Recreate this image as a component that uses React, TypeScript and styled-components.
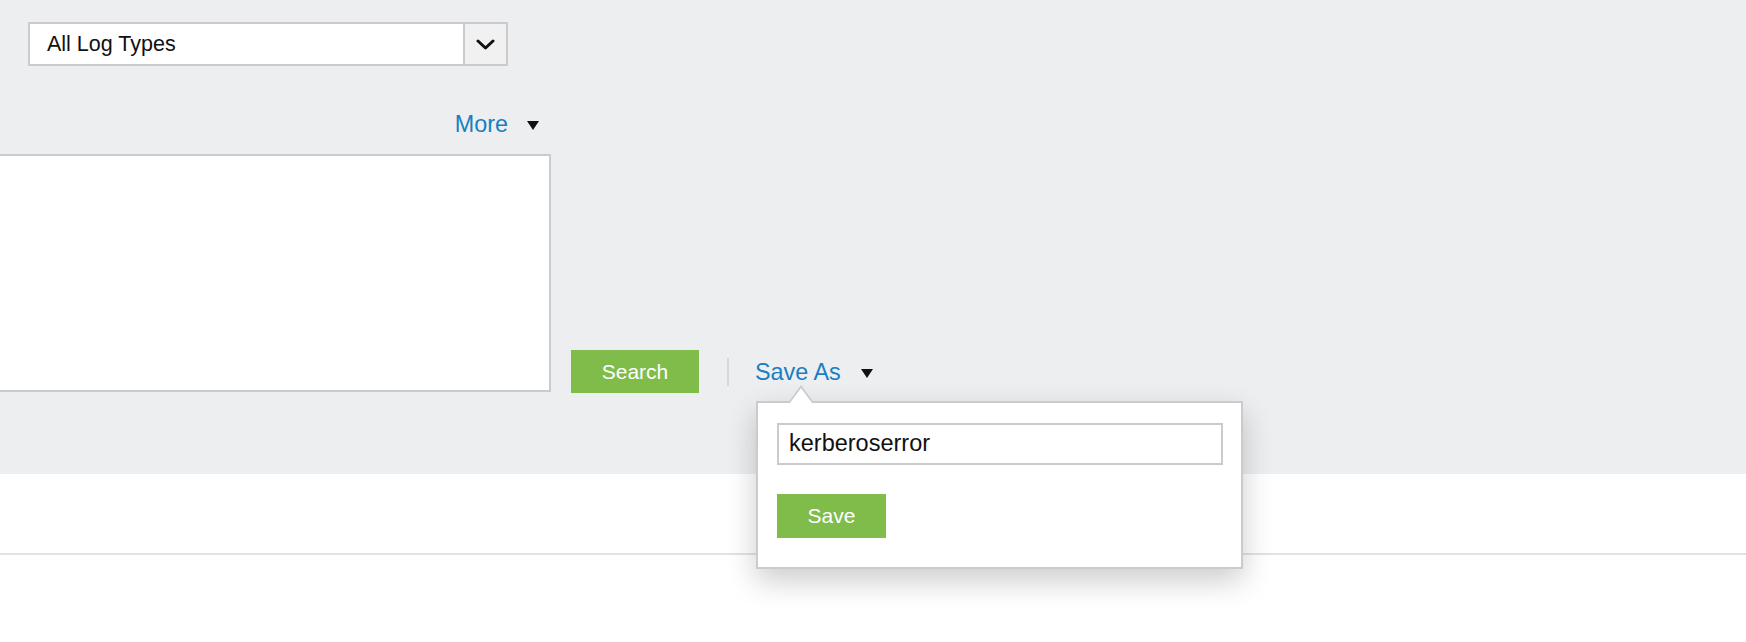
import React from 'react';
import styled, { createGlobalStyle } from 'styled-components';

const GlobalStyle = createGlobalStyle`
	html, body {
		margin: 0;
		padding: 0;
		background: #ffffff;
		font-family: 'Liberation Sans', Arial, sans-serif;
		color: #111111;
	}

	* {
		box-sizing: border-box;
	}
`;

const BORDER = '#c9cbce';
const BLUE = '#1a7ec2';
const GREEN = '#80bc4a';

const Page = styled.div`
	display: flex;
	flex-direction: column;
	width: 100%;
	overflow: hidden;
`;

const FilterPanel = styled.section`
	display: flex;
	flex-direction: column;
	background: #edeef0;
	padding: 22px 0 82px 0;
`;

const SelectBox = styled.div`
	display: flex;
	align-items: stretch;
	width: 480px;
	height: 44px;
	margin-left: 28px;
	background: #ffffff;
	border: 2px solid ${BORDER};
`;

const SelectValue = styled.div`
	flex: 1;
	display: flex;
	align-items: center;
	padding-left: 17px;
	font-size: 21.5px;
	color: #111111;
`;

const SelectToggle = styled.div`
	width: 43px;
	display: flex;
	align-items: center;
	justify-content: center;
	background: #f1f1f2;
	border-left: 2px solid ${BORDER};
`;

const MoreRow = styled.div`
	display: flex;
	justify-content: flex-end;
	align-items: center;
	width: 551px;
	height: 28px;
	margin-top: 44px;
	padding-right: 12px;
`;

const LinkToggle = styled.span<{ $gap: number }>`
	display: inline-flex;
	align-items: center;
	gap: ${(props) => props.$gap}px;
	font-size: 23.4px;
	line-height: 28px;
	color: ${BLUE};
	cursor: pointer;
`;

const Caret = styled.span`
	display: inline-block;
	width: 0;
	height: 0;
	margin-top: 3px;
	border-left: 6.5px solid transparent;
	border-right: 6.5px solid transparent;
	border-top: 9px solid #111111;
`;

const QueryRow = styled.div`
	display: flex;
	align-items: flex-end;
	margin-top: 16px;
`;

const QueryArea = styled.textarea`
	width: 551px;
	height: 238px;
	background: #ffffff;
	border: 2px solid ${BORDER};
	border-left: none;
	resize: none;
	outline: none;
	font-family: inherit;
`;

const ActionGroup = styled.div`
	display: flex;
	align-items: center;
	height: 43px;
	margin-bottom: -1px;
	margin-left: 20px;
`;

const GreenButton = styled.button<{ $width: number; $height: number }>`
	width: ${(props) => props.$width}px;
	height: ${(props) => props.$height}px;
	border: none;
	background: ${GREEN};
	color: #ffffff;
	font-family: inherit;
	font-size: 21px;
	cursor: pointer;
`;

const Separator = styled.span`
	width: 2px;
	height: 28px;
	margin-left: 28px;
	background: #d6d8db;
`;

const SaveAsWrap = styled.div`
	position: relative;
	margin-left: 26px;
`;

const Popover = styled.div`
	position: absolute;
	left: 1px;
	top: calc(100% + 15px);
	width: 487px;
	padding: 20px 18px 29px 19px;
	background: #ffffff;
	border: 2px solid ${BORDER};
	box-shadow: 0 12px 28px rgba(0, 0, 0, 0.2);
	z-index: 5;

	&::before,
	&::after {
		content: '';
		position: absolute;
		width: 0;
		height: 0;
	}

	&::before {
		left: 30px;
		top: -18px;
		border-left: 13px solid transparent;
		border-right: 13px solid transparent;
		border-bottom: 18px solid ${BORDER};
	}

	&::after {
		left: 32px;
		top: -15px;
		border-left: 11px solid transparent;
		border-right: 11px solid transparent;
		border-bottom: 15px solid #ffffff;
	}
`;

const NameInput = styled.input`
	display: block;
	width: 446px;
	height: 42px;
	padding: 0 10px;
	border: 2px solid ${BORDER};
	font-family: inherit;
	font-size: 23.5px;
	color: #111111;
	outline: none;
`;

const PopoverActions = styled.div`
	display: flex;
	margin-top: 29px;
`;

const ResultsArea = styled.section`
	background: #ffffff;
	padding-top: 79px;
	height: 169px;
`;

const Rule = styled.div`
	height: 2px;
	background: #e0e2e4;
`;

const ChevronDown = (): JSX.Element => (
	<svg width="19" height="11" viewBox="0 0 19 11" fill="none">
		<polyline points="2,2 9.5,9 17,2" stroke="#111" strokeWidth="3" strokeLinecap="round" strokeLinejoin="round" />
	</svg>
);

const App = (): JSX.Element => {
	const [name, setName] = React.useState<string>('kerberoserror');

	return (
		<Page>
			<GlobalStyle />
			<FilterPanel>
				<SelectBox>
					<SelectValue>All Log Types</SelectValue>
					<SelectToggle>
						<ChevronDown />
					</SelectToggle>
				</SelectBox>
				<MoreRow>
					<LinkToggle $gap={19}>
						More
						<Caret />
					</LinkToggle>
				</MoreRow>
				<QueryRow>
					<QueryArea />
					<ActionGroup>
						<GreenButton $width={128} $height={43}>
							Search
						</GreenButton>
						<Separator />
						<SaveAsWrap>
							<LinkToggle $gap={20}>
								Save As
								<Caret />
							</LinkToggle>
							<Popover>
								<NameInput value={name} onChange={(e): void => setName(e.target.value)} />
								<PopoverActions>
									<GreenButton $width={109} $height={44}>
										Save
									</GreenButton>
								</PopoverActions>
							</Popover>
						</SaveAsWrap>
					</ActionGroup>
				</QueryRow>
			</FilterPanel>
			<ResultsArea>
				<Rule />
			</ResultsArea>
		</Page>
	);
};

export default App;
